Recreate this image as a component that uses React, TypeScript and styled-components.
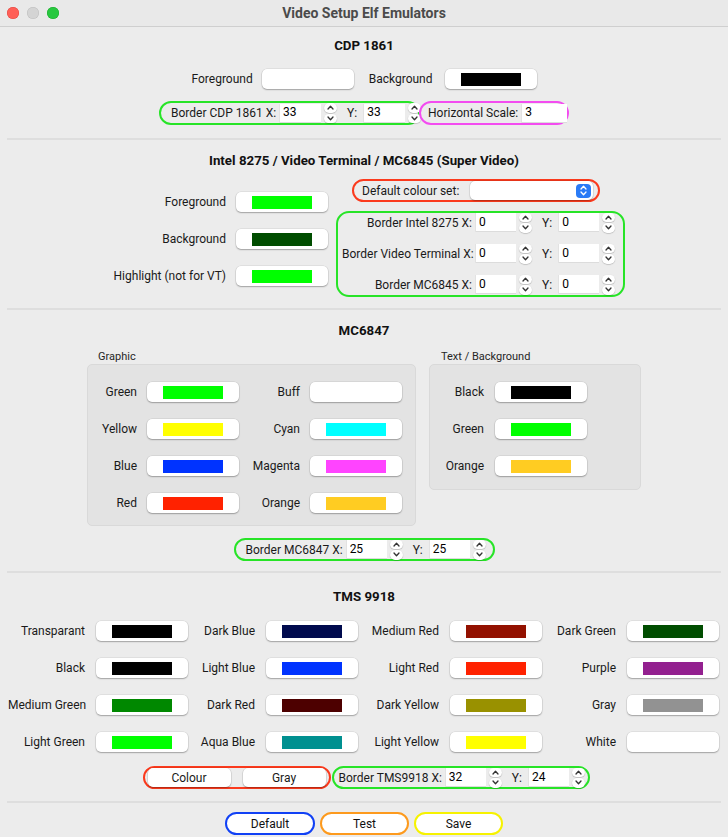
import React from 'react';
import styled, { createGlobalStyle } from 'styled-components';

const GlobalStyle = createGlobalStyle`
  html, body { margin: 0; padding: 0; background: #ececec; }
  body { font-family: Roboto, "Liberation Sans", Arial, sans-serif; font-size: 12px; color: #1a1a1a; }
  * { box-sizing: border-box; }
`;

const Window = styled.div`
  width: 728px;
  height: 837px;
  background: #ececec;
  display: flex;
  flex-direction: column;
  overflow: hidden;
`;

const TitleBar = styled.header`
  height: 27px;
  flex: none;
  display: grid;
  grid-template-columns: 1fr auto 1fr;
  align-items: center;
  background: #e9e9e9;
  border-bottom: 1px solid #cfcfcf;
`;

const Lights = styled.div`
  display: flex;
  gap: 8px;
  padding-left: 7px;
`;

const Light = styled.span<{ $c: string; $b: string }>`
  width: 12px;
  height: 12px;
  border-radius: 50%;
  background: ${p => p.$c};
  box-shadow: inset 0 0 0 0.5px ${p => p.$b};
`;

const WindowTitle = styled.div`
  font-size: 14px;
  font-weight: 700;
  color: #4b4b4b;
`;

const Section = styled.section<{ $h: number; $pt: number }>`
  height: ${p => p.$h}px;
  padding-top: ${p => p.$pt}px;
  flex: none;
  display: flex;
  flex-direction: column;
  align-items: center;
`;

const SectionTitle = styled.h2`
  margin: 0;
  font-size: 13.3px;
  font-weight: 700;
  line-height: 16px;
  color: #111;
`;

const Rule = styled.div`
  flex: none;
  height: 2px;
  margin: 0 7px;
  background: #dedede;
`;

const Row = styled.div<{ $mt: number; $gap?: number; $pl?: number }>`
  display: flex;
  align-items: center;
  margin-top: ${p => p.$mt}px;
  gap: ${p => p.$gap ?? 0}px;
  padding-left: ${p => p.$pl ?? 0}px;
`;

const Label = styled.span<{ $w?: number }>`
  white-space: nowrap;
  line-height: 14px;
  ${p => (p.$w ? `width: ${p.$w}px; text-align: right; flex: none;` : '')}
`;

const RightLabel = styled.span`
  white-space: nowrap;
  text-align: right;
  line-height: 14px;
`;

const ColorButton = styled.div`
  width: 92px;
  height: 20px;
  background: #fff;
  border-radius: 5px;
  box-shadow: 0 0 0 0.5px rgba(0, 0, 0, 0.1), 0 1px 1.5px rgba(0, 0, 0, 0.28);
  display: flex;
  align-items: center;
  justify-content: center;
`;

const Swatch = styled.span<{ $c: string }>`
  width: 60px;
  height: 13px;
  background: ${p => p.$c};
`;

const Outline = styled.div<{ $c: string; $w: number; $h: number; $pl?: number; $pr?: number }>`
  width: ${p => p.$w}px;
  height: ${p => p.$h}px;
  border: 2px solid ${p => p.$c};
  border-radius: 12px;
  display: flex;
  align-items: center;
  padding-left: ${p => p.$pl ?? 0}px;
  padding-right: ${p => p.$pr ?? 0}px;
  flex: none;
`;

const Input = styled.input<{ $w: number }>`
  width: ${p => p.$w}px;
  height: 19px;
  border: none;
  outline: none;
  background: #fff;
  box-shadow: inset 1px 0 0 #e2e2e2, inset 0 -1px 0 #dcdcdc;
  font: inherit;
  font-size: 12px;
  color: #000;
  padding: 0 4px 2px;
  margin: 0;
  flex: none;
`;

const Stepper = styled.div`
  width: 13px;
  height: 20px;
  display: flex;
  flex-direction: column;
  gap: 1px;
  flex: none;
`;

const StepHalf = styled.div`
  flex: 1;
  background: #fff;
  border-radius: 5px;
  box-shadow: 0 0.5px 1px rgba(0, 0, 0, 0.3);
  display: flex;
  align-items: center;
  justify-content: center;
`;

const Field = styled.div`
  display: flex;
  align-items: center;
  gap: 3px;
  flex: none;
`;

const YLabel = styled.span`
  margin-left: 7px;
  margin-right: 3px;
  line-height: 14px;
`;

const FieldLine = styled.div<{ $pl?: number }>`
  display: flex;
  align-items: center;
  padding-left: ${p => p.$pl ?? 0}px;
  gap: 3px;
`;

const Chevron = ({ up, color = '#333' }: { up?: boolean; color?: string }) => (
  <svg width="7" height="5" viewBox="0 0 7 5">
    <path
      d={up ? 'M1 4 L3.5 1.2 L6 4' : 'M1 1 L3.5 3.8 L6 1'}
      fill="none"
      stroke={color}
      strokeWidth="1.3"
      strokeLinecap="round"
      strokeLinejoin="round"
    />
  </svg>
);

const NumberField = ({ value, w }: { value: string; w: number }) => (
  <Field>
    <Input $w={w} defaultValue={value} readOnly />
    <Stepper>
      <StepHalf><Chevron up /></StepHalf>
      <StepHalf><Chevron /></StepHalf>
    </Stepper>
  </Field>
);

const XYFields = ({ label, x, y, w = 41, lw, pl }: { label: string; x: string; y: string; w?: number; lw?: number; pl?: number }) => (
  <FieldLine $pl={pl}>
    <Label $w={lw}>{label}</Label>
    <NumberField value={x} w={w} />
    <YLabel>Y:</YLabel>
    <NumberField value={y} w={w} />
  </FieldLine>
);

/* Intel section */
const IntelBody = styled.div`
  align-self: flex-start;
  margin-left: 82px;
  margin-top: 10px;
  display: flex;
  gap: 8px;
  align-items: flex-start;
`;

const ColorGrid = styled.div<{ $cols: string; $gap?: number; $pt?: number }>`
  display: grid;
  grid-template-columns: ${p => p.$cols};
  grid-auto-rows: 20px;
  column-gap: ${p => p.$gap ?? 10}px;
  row-gap: 17px;
  align-items: center;
  padding-top: ${p => p.$pt ?? 0}px;
`;

const RightColumn = styled.div`
  display: flex;
  flex-direction: column;
  gap: 9px;
`;

const SelectPill = styled(Outline)`
  margin-left: 16px;
  justify-content: space-between;
`;

const Select = styled.div`
  width: 123px;
  height: 19px;
  background: #fff;
  border-radius: 5px;
  box-shadow: 0 0 0 0.5px rgba(0, 0, 0, 0.08), 0 0.5px 1.5px rgba(0, 0, 0, 0.25);
  display: flex;
  align-items: center;
  justify-content: flex-end;
  padding-right: 2px;
`;

const SelectArrows = styled.div`
  width: 15px;
  height: 14px;
  border-radius: 4px;
  background: #2a7bf6;
  display: flex;
  flex-direction: column;
  align-items: center;
  justify-content: center;
  gap: 1px;
`;

const BorderBox = styled.div`
  width: 289px;
  height: 86px;
  border: 2px solid #27e427;
  border-radius: 13px;
  display: flex;
  flex-direction: column;
  justify-content: center;
  gap: 11px;
  padding-bottom: 1px;
`;

/* MC6847 */
const GroupsRow = styled.div`
  align-self: flex-start;
  margin-left: 87px;
  margin-top: 11px;
  display: flex;
  gap: 13px;
  align-items: flex-start;
`;

const Group = styled.div`
  display: flex;
  flex-direction: column;
`;

const GroupCaption = styled.div<{ $pl: number }>`
  font-size: 11px;
  line-height: 14px;
  padding-left: ${p => p.$pl}px;
  color: #262626;
`;

const GroupBox = styled.div<{ $w: number; $pb: number }>`
  width: ${p => p.$w}px;
  background: #e3e3e3;
  border: 1px solid #d9d9d9;
  border-radius: 5px;
  padding: 17px 0 ${p => p.$pb}px 0;
`;

/* TMS */
const TmsGrid = styled(ColorGrid)`
  align-self: stretch;
  padding-left: 8px;
  margin-top: 16px;
`;

const ToggleButton = styled.div`
  width: 83px;
  height: 19px;
  background: #fff;
  border-radius: 5px;
  box-shadow: 0 0 0 0.5px rgba(0, 0, 0, 0.1), 0 1px 1.5px rgba(0, 0, 0, 0.28);
  display: flex;
  align-items: center;
  justify-content: center;
`;

const ToggleGroup = styled(Outline)`
  justify-content: space-between;
`;

const BottomBar = styled.footer`
  flex: 1;
  display: flex;
  justify-content: center;
  gap: 5px;
  padding-top: 9px;
`;

const PushButton = styled.button<{ $c: string; $w: number }>`
  width: ${p => p.$w}px;
  height: 23px;
  border: 2px solid ${p => p.$c};
  border-radius: 12px;
  background: #fff;
  font: inherit;
  font-size: 12px;
  color: #111;
  padding: 0;
  cursor: default;
`;

const ColorCell = ({ c }: { c: string }) => (
  <ColorButton>
    <Swatch $c={c} />
  </ColorButton>
);

const GREEN = '#27e427';
const RED = '#fb3a1d';

const graphic: [string, string, string, string][] = [
  ['Green', '#00ff00', 'Buff', '#ffffff'],
  ['Yellow', '#ffff00', 'Cyan', '#00ffff'],
  ['Blue', '#0033ff', 'Magenta', '#ff44ff'],
  ['Red', '#ff2200', 'Orange', '#ffcc22'],
];

const textBg: [string, string][] = [
  ['Black', '#000000'],
  ['Green', '#00ff00'],
  ['Orange', '#ffcc22'],
];

const tms: [string, string][][] = [
  [['Transparant', '#000000'], ['Dark Blue', '#000a4d'], ['Medium Red', '#931100'], ['Dark Green', '#004d00']],
  [['Black', '#000000'], ['Light Blue', '#0033ff'], ['Light Red', '#ff2200'], ['Purple', '#93208f']],
  [['Medium Green', '#008800'], ['Dark Red', '#4d0000'], ['Dark Yellow', '#999100'], ['Gray', '#929292']],
  [['Light Green', '#00ff00'], ['Aqua Blue', '#009090'], ['Light Yellow', '#ffff00'], ['White', '#ffffff']],
];

export default function App() {
  return (
    <>
      <GlobalStyle />
      <Window>
        <TitleBar>
          <Lights>
            <Light $c="#ff5f57" $b="#e2463f" />
            <Light $c="#d4d4d4" $b="#bdbdbd" />
            <Light $c="#28c840" $b="#1aab29" />
          </Lights>
          <WindowTitle>Video Setup Elf Emulators</WindowTitle>
          <span />
        </TitleBar>

        <Section $h={111} $pt={11}>
          <SectionTitle>CDP 1861</SectionTitle>
          <Row $mt={15}>
            <Label>Foreground</Label>
            <Row $mt={0} style={{ marginLeft: 9 }}><ColorCell c="#ffffff" /></Row>
            <Label style={{ marginLeft: 15 }}>Background</Label>
            <Row $mt={0} style={{ marginLeft: 12 }}><ColorCell c="#000000" /></Row>
          </Row>
          <Row $mt={12}>
            <Outline $c={GREEN} $w={261} $h={24} $pl={10}>
              <XYFields label="Border CDP 1861 X:" x="33" y="33" w={42} />
            </Outline>
            <Outline $c="#f34cf0" $w={150} $h={24} $pl={7} style={{ marginLeft: -1 }}>
              <FieldLine>
                <Label>Horizontal Scale:</Label>
                <Input $w={46} defaultValue="3" readOnly />
              </FieldLine>
            </Outline>
          </Row>
        </Section>
        <Rule />

        <Section $h={168} $pt={13}>
          <SectionTitle>Intel 8275 / Video Terminal / MC6845 (Super Video)</SectionTitle>
          <IntelBody>
            <ColorGrid $cols="144px 92px" $pt={13}>
              <RightLabel>Foreground</RightLabel>
              <ColorCell c="#00ff00" />
              <RightLabel>Background</RightLabel>
              <ColorCell c="#004d00" />
              <RightLabel>Highlight (not for VT)</RightLabel>
              <ColorCell c="#00ff00" />
            </ColorGrid>
            <RightColumn>
              <SelectPill $c={RED} $w={248} $h={23} $pl={8} $pr={5}>
                <Label>Default colour set:</Label>
                <Select>
                  <SelectArrows>
                    <Chevron up color="#fff" />
                    <Chevron color="#fff" />
                  </SelectArrows>
                </Select>
              </SelectPill>
              <BorderBox>
                <XYFields label="Border Intel 8275 X:" x="0" y="0" lw={130} pl={4} />
                <XYFields label="Border Video Terminal X:" x="0" y="0" lw={130} pl={4} />
                <XYFields label="Border MC6845 X:" x="0" y="0" lw={130} pl={4} />
              </BorderBox>
            </RightColumn>
          </IntelBody>
        </Section>
        <Rule />

        <Section $h={261} $pt={13}>
          <SectionTitle>MC6847</SectionTitle>
          <GroupsRow>
            <Group>
              <GroupCaption $pl={11}>Graphic</GroupCaption>
              <GroupBox $w={329} $pb={12}>
                <ColorGrid $cols="49px 92px 51px 92px">
                  {graphic.map(([a, ac, b, bc]) => (
                    <React.Fragment key={a}>
                      <RightLabel>{a}</RightLabel>
                      <ColorCell c={ac} />
                      <RightLabel>{b}</RightLabel>
                      <ColorCell c={bc} />
                    </React.Fragment>
                  ))}
                </ColorGrid>
              </GroupBox>
            </Group>
            <Group>
              <GroupCaption $pl={12}>Text / Background</GroupCaption>
              <GroupBox $w={212} $pb={13}>
                <ColorGrid $cols="54px 92px" $gap={11}>
                  {textBg.map(([a, ac]) => (
                    <React.Fragment key={a}>
                      <RightLabel>{a}</RightLabel>
                      <ColorCell c={ac} />
                    </React.Fragment>
                  ))}
                </ColorGrid>
              </GroupBox>
            </Group>
          </GroupsRow>
          <Row $mt={12}>
            <Outline $c={GREEN} $w={261} $h={23} $pl={10}>
              <XYFields label="Border MC6847 X:" x="25" y="25" />
            </Outline>
          </Row>
        </Section>
        <Rule />

        <Section $h={228} $pt={16}>
          <SectionTitle>TMS 9918</SectionTitle>
          <TmsGrid $cols="77px 92px 56px 92px 70px 92px 63px 92px" $gap={11}>
            {tms.map(row =>
              row.map(([name, c]) => (
                <React.Fragment key={name + c}>
                  <RightLabel>{name}</RightLabel>
                  <ColorCell c={c} />
                </React.Fragment>
              ))
            )}
          </TmsGrid>
          <Row $mt={14} $pl={4}>
            <ToggleGroup $c={RED} $w={188} $h={23} $pl={3} $pr={3}>
              <ToggleButton>Colour</ToggleButton>
              <ToggleButton>Gray</ToggleButton>
            </ToggleGroup>
            <Outline $c={GREEN} $w={258} $h={23} $pl={5} style={{ marginLeft: 1 }}>
              <XYFields label="Border TMS9918 X:" x="32" y="24" />
            </Outline>
          </Row>
        </Section>
        <Rule />

        <BottomBar>
          <PushButton $c="#1141f5" $w={90}>Default</PushButton>
          <PushButton $c="#fd9a1d" $w={89}>Test</PushButton>
          <PushButton $c="#f6f200" $w={89}>Save</PushButton>
        </BottomBar>
      </Window>
    </>
  );
}
